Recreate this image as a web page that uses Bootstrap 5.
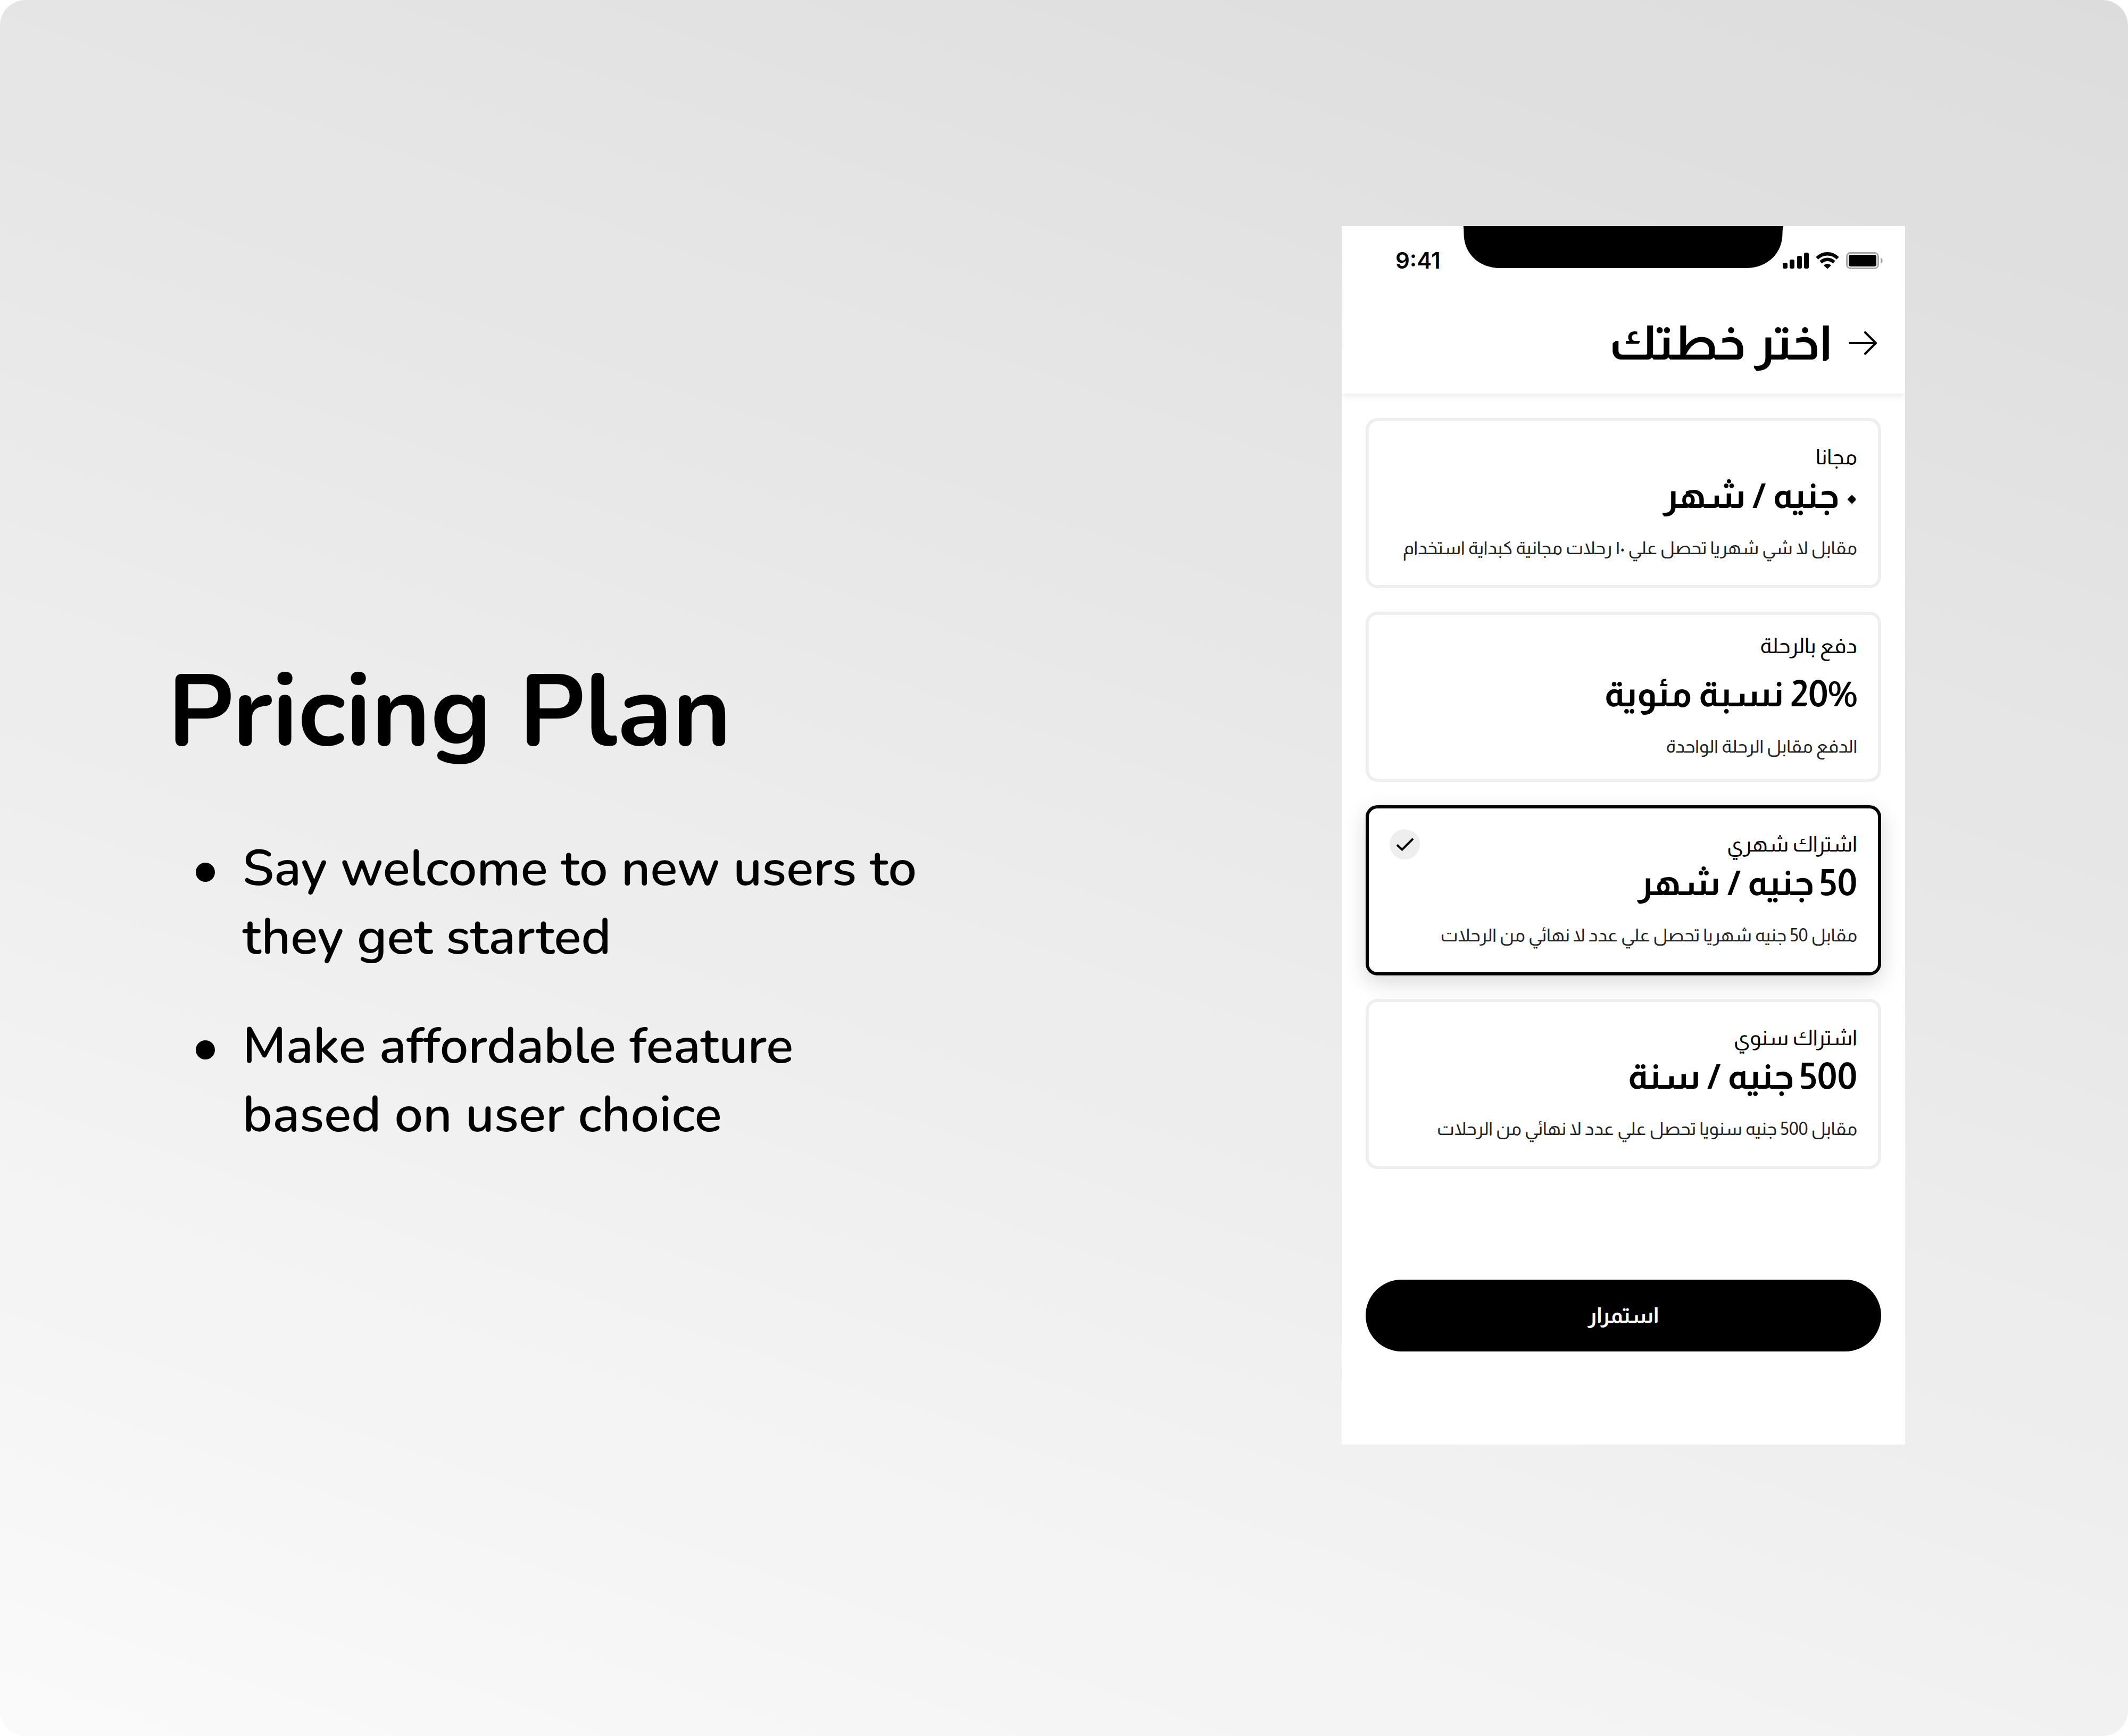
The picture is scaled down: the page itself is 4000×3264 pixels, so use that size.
<!DOCTYPE html>
<html lang="en">
<head>
<meta charset="utf-8">
<meta name="viewport" content="width=device-width, initial-scale=1">
<title>Pricing Plan</title>
<link href="https://cdn.jsdelivr.net/npm/bootstrap@5.3.0/dist/css/bootstrap.min.css" rel="stylesheet">
<style>
  body { background: #fff; color: #000; }
  .stage {
    min-height: 100vh;
    padding: 425px 419px 120px 315px;
    border-radius: 48px;
    background: linear-gradient(19deg, #fafafa, #dcdcdc);
    font-family: Nunito, "Open Sans", sans-serif;
  }
  .intro { padding-top: 784px; max-width: 1440px; }
  .intro-title { font-size: 190px; line-height: 260px; font-weight: 700; margin-bottom: 100px; }
  .points { padding-left: 53px; gap: 76px; font-size: 95px; line-height: 129px; font-weight: 600; }
  .points li { gap: 52px; }
  .points li::before {
    content: ""; flex: none; width: 36px; height: 36px; margin-top: 53px;
    border-radius: 50%; background: #000;
  }

  .phone { width: 1059px; background: #fff; font-family: Almarai, Cairo, "DejaVu Sans", sans-serif; }
  .status { height: 130px; padding: 0 41px 0 101px; font: 600 42px/50px Inter, sans-serif; }
  .status-icons { gap: 13px; }
  .notch { top: 0; left: 50%; transform: translateX(-50%); }
  .topbar { height: 185px; padding: 0 52px 6px; gap: 29px; box-shadow: 0 6px 12px rgba(0, 0, 0, .07); }
  .topbar-title { font-size: 90px; line-height: 100px; font-weight: 700; }

  .plans { padding: 46px 45px 0; gap: 44px; }
  .plan {
    height: 320px; padding: 0 39px 6px; border: 6px solid #eee; border-radius: 22px;
    background: #fff; cursor: pointer;
  }
  .plan-name { font-size: 40px; line-height: 44px; margin-bottom: 12px; }
  .plan-price { font-size: 68px; line-height: 76px; font-weight: 700; margin-bottom: 42px; }
  .plan-note { font-size: 34px; line-height: 38px; color: #222; }
  .plan-spaced .plan-name { margin-bottom: 30px; }
  .plan-tick { display: none; top: 39px; left: 39px; width: 57px; height: 57px; border-radius: 50%; background: #eee; }
  .btn-check:checked + .plan { border-color: #000; box-shadow: 0 12px 40px rgba(0, 0, 0, .16); }
  .btn-check:checked + .plan .plan-tick { display: flex; }

  .actions { padding: 208px 45px 175px; }
  .go { height: 135px; padding: 0 0 2px; font-size: 40px; line-height: 44px; font-weight: 700; background: #000; color: #fff; border: 0; }
</style>
</head>
<body>
<main class="stage d-flex justify-content-between align-items-start">
  <section class="intro">
    <h1 class="intro-title">Pricing Plan</h1>
    <ul class="points list-unstyled d-flex flex-column mb-0">
      <li class="d-flex align-items-start"><span>Say welcome to new users to they get started</span></li>
      <li class="d-flex align-items-start"><span>Make affordable feature based on user choice</span></li>
    </ul>
  </section>

  <section class="phone flex-shrink-0 overflow-hidden" lang="ar" dir="rtl">
    <div class="status position-relative d-flex align-items-center justify-content-between bg-white" dir="ltr">
      <span>9:41</span>
      <svg class="notch position-absolute" width="603" height="79" viewBox="0 0 603 79" aria-hidden="true"><path d="M0 0H602Q600 4 600 14C600 52 571 79 532 79H69C30 79 1 52 1 14Q1 4 0 0Z"/></svg>
      <div class="status-icons d-flex align-items-center">
        <svg width="49" height="32" viewBox="0 0 49 32" aria-hidden="true"><rect y="20" width="9" height="11" rx="3"/><rect x="13" y="14" width="9" height="17" rx="3"/><rect x="27" y="7" width="9" height="24" rx="3"/><rect x="40" y="1" width="9" height="30" rx="3"/></svg>
        <svg width="44" height="32" viewBox="0 0 44 32" fill="none" stroke="#000" aria-hidden="true"><path d="M2.500 11.500C14 .5 30 .5 41.500 11.500" stroke-width="6.500"/><path d="M9.500 19C17 12 27 12 34.500 19" stroke-width="6.500"/><path d="M15 25C19 21 25 21 29 25L22 31.500Z" fill="#000" stroke="none"/></svg>
        <svg width="70" height="32" viewBox="0 0 70 32" aria-hidden="true"><rect x="1.500" y="1.500" width="59" height="29" rx="7" fill="none" stroke="#a6a6a6" stroke-width="3"/><rect x="5" y="5" width="52" height="22" rx="4"/><path d="M65 10.500C70 12.500 70 19.500 65 21.500Z" fill="#a6a6a6"/></svg>
      </div>
    </div>

    <header class="topbar d-flex align-items-center">
      <a href="#" class="d-flex" aria-label="رجوع">
        <svg width="56" height="44" viewBox="0 0 56 44" fill="none" stroke="#000" stroke-width="4" stroke-linecap="round" stroke-linejoin="round" aria-hidden="true"><path d="M4 22H53M33 2L53 22L33 42"/></svg>
      </a>
      <h2 class="topbar-title mb-0">اختر خطتك</h2>
    </header>

    <form>
      <div class="plans d-flex flex-column">
        <input class="btn-check" type="radio" name="plan" id="plan-free">
        <label class="plan d-flex flex-column justify-content-center" for="plan-free">
          <span class="plan-name">مجانا</span>
          <span class="plan-price">٠ جنيه / شهر</span>
          <span class="plan-note">مقابل لا شي شهريا تحصل علي ١٠ رحلات مجانية كبداية استخدام</span>
        </label>

        <input class="btn-check" type="radio" name="plan" id="plan-trip">
        <label class="plan plan-spaced d-flex flex-column justify-content-center" for="plan-trip">
          <span class="plan-name">دفع بالرحلة</span>
          <span class="plan-price">20% نسبة مئوية</span>
          <span class="plan-note">الدفع مقابل الرحلة الواحدة</span>
        </label>

        <input class="btn-check" type="radio" name="plan" id="plan-month" checked>
        <label class="plan position-relative d-flex flex-column justify-content-center" for="plan-month">
          <span class="plan-tick position-absolute align-items-center justify-content-center">
            <svg width="34" height="26" viewBox="0 0 34 26" fill="none" stroke="#000" stroke-width="4" aria-hidden="true"><path d="M2 13.500L11.500 22.500L32 2"/></svg>
          </span>
          <span class="plan-name">اشتراك شهري</span>
          <span class="plan-price">50 جنيه / شهر</span>
          <span class="plan-note">مقابل 50 جنيه شهريا تحصل علي عدد لا نهائي من الرحلات</span>
        </label>

        <input class="btn-check" type="radio" name="plan" id="plan-year">
        <label class="plan d-flex flex-column justify-content-center" for="plan-year">
          <span class="plan-name">اشتراك سنوي</span>
          <span class="plan-price">500 جنيه / سنة</span>
          <span class="plan-note">مقابل 500 جنيه سنويا تحصل علي عدد لا نهائي من الرحلات</span>
        </label>
      </div>
      <div class="actions">
        <button type="button" class="go btn w-100 rounded-pill">استمرار</button>
      </div>
    </form>
  </section>
</main>
<script src="https://cdn.jsdelivr.net/npm/bootstrap@5.3.0/dist/js/bootstrap.bundle.min.js"></script>
</body>
</html>
